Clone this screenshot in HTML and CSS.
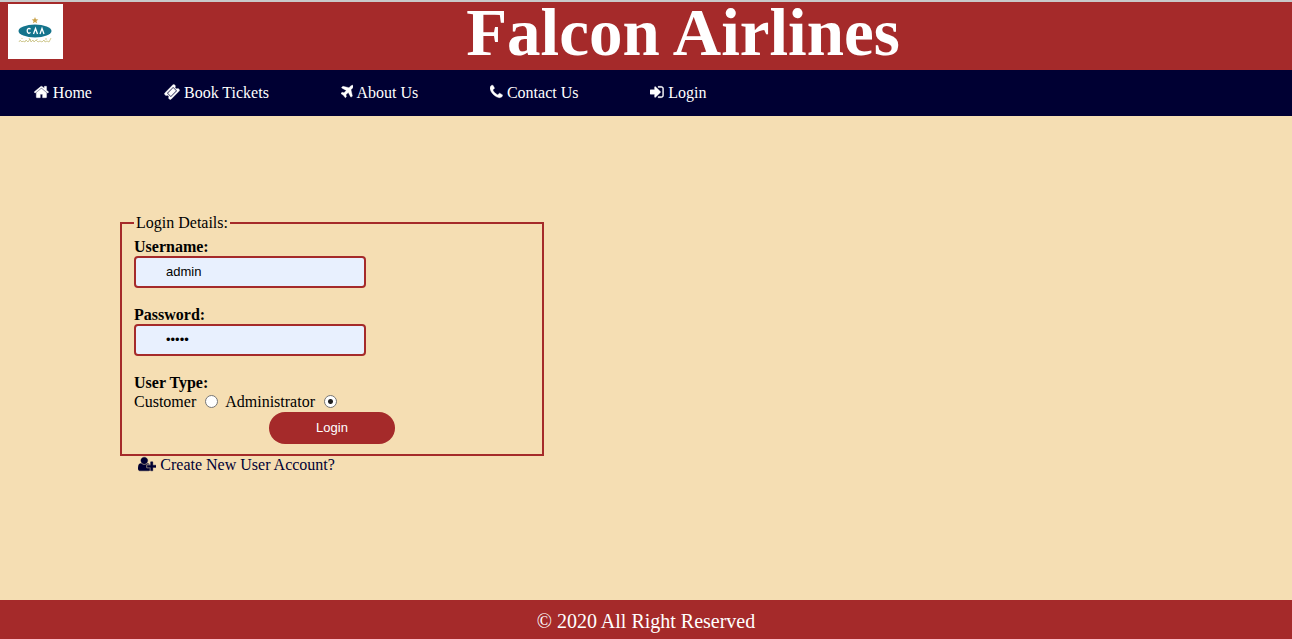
FILE: index.html
```html
<!DOCTYPE html>
<html lang="en">
<head>
<meta charset="utf-8">
<title>Falcon Airlines</title>
<link rel="stylesheet" href="styles.css">
</head>
<body>
<header class="banner">
  <svg class="logo" viewBox="0 0 55 55" role="img" aria-label="CAA logo">
    <rect width="55" height="55" fill="#fff"/>
    <path d="M27 13l.9 2.300 2.400.1-1.900 1.500.7 2.400-2.100-1.400-2.100 1.400.7-2.400-1.900-1.500 2.400-.1z" fill="#c9a24a"/>
    <ellipse cx="27" cy="27" rx="16.500" ry="6.500" fill="#14748c"/>
    <path d="M22.500 25.300c-1.400-1.600-3.300-.8-3.300 1.500s1.900 3.200 3.300 1.600M25.500 30l2-5.500 2 5.500M32 30l2-5.500 2 5.500" fill="none" stroke="#fff" stroke-width="1.300"/>
    <path d="M11 38Q12 35 13 37T15 37L17 38 18 36 20 38 22 35 23 38 25 36 26 38 28 36 30 38 32 37 34 38 36 36 37 38 39 37 41 38 43 34M14 34V35M21 34L22 36M29 35V36M38 34V36" fill="none" stroke="#c5bd78" stroke-width=".8"/>
  </svg>
  <h1 class="title">Falcon Airlines</h1>
</header>
<nav class="nav">
  <a href="#"><svg class="icon" viewBox="0 0 1664 1792" aria-hidden="true"><path d="M1408 992v480q0 26-19 45t-45 19h-384v-384h-256v384h-384q-26 0-45-19t-19-45v-480q0-1 .5-3t.5-3l575-474 575 474q1 2 1 6zm223-69l-62 74q-8 9-21 11h-3q-13 0-21-7l-692-577-692 577q-12 8-24 7-13-2-21-11l-62-74q-8-10-7-23.500t11-21.500l719-599q32-26 76-26t76 26l244 204v-195q0-14 9-23t23-9h192q14 0 23 9t9 23v408l219 182q10 8 11 21.500t-7 23.500z"/></svg> Home</a>
  <a href="#"><svg class="icon" viewBox="0 0 1792 1792" aria-hidden="true"><path d="M1024 452l316 316-572 572-316-316zm-211 979l618-618q19-19 19-45t-19-45l-362-362q-18-18-45-18t-45 18l-618 618q-19 19-19 45t19 45l362 362q18 18 45 18t45-18zm889-637l-907 908q-37 37-90.500 37t-90.500-37l-126-126q56-56 56-136t-56-136-136-56-136 56l-125-126q-37-37-37-90.500t37-90.500l907-906q37-37 90.500-37t90.500 37l125 125q-56 56-56 136t56 136 136 56 136-56l126 125q37 37 37 90.500t-37 90.500z"/></svg> Book Tickets</a>
  <a href="#"><svg class="icon" viewBox="192 0 1408 1792" aria-hidden="true"><path d="M1568 160q44 52 12 148t-108 172l-161 161 160 696q5 19-12 33l-128 96q-7 6-19 6-4 0-7-1-15-3-21-16l-279-508-259 259 53 194q5 17-8 31l-96 96q-9 9-23 9h-2q-15-2-24-13l-189-252-252-189q-11-7-13-23-1-13 9-25l96-97q9-9 23-9 6 0 8 1l194 53 259-259-508-279q-14-8-17-24-2-16 9-27l128-128q14-13 30-8l665 159 160-160q76-76 172-108t148 12z"/></svg> About Us</a>
  <a href="#"><svg class="icon" viewBox="192 0 1408 1792" aria-hidden="true"><path d="M1600 1240q0 27-10 70.500t-21 68.500q-21 50-122 106-94 51-186 51-27 0-53-3.500t-57-12.500-47-14.500-55.500-20.500-49.500-18q-98-35-175-83-127-79-264-216t-216-264q-48-77-83-175-3-9-18-49.500t-20.500-55.500-14.500-47-12.500-57-3.500-53q0-92 51-186 56-101 106-122 25-11 68.500-21t70.500-10q14 0 21 3 18 6 53 76 11 19 30 54t35 63.500 31 53.500q3 4 17.500 25t21.500 35.500 7 28.500q0 20-28.500 50t-62 55-62 53-28.500 46q0 9 5 22.500t8.500 20.500 14 24 11.500 19q76 137 174 235t235 174q2 1 19 11.500t24 14 20.500 8.500 22.500 5q18 0 46-28.500t53-62 55-62 50-28.500q14 0 28.500 7t35.500 21.500 25 17.500q25 15 53.500 31t63.500 35 54 30q70 35 76 53 3 7 3 21z"/></svg> Contact Us</a>
  <a href="#"><svg class="icon" viewBox="128 0 1536 1792" aria-hidden="true"><path d="M1312 896q0 26-19 45l-544 544q-19 19-45 19t-45-19-19-45v-288h-448q-26 0-45-19t-19-45v-384q0-26 19-45t45-19h448v-288q0-26 19-45t45-19 45 19l544 544q19 19 19 45zm352-352v704q0 119-84.500 203.500t-203.500 84.500h-320q-13 0-22.500-9.500t-9.500-22.500q0-4-1-20t-.5-26.500 3-23.500 10-19.500 20.500-6.500h320q66 0 113-47t47-113v-704q0-66-47-113t-113-47h-312l-11.500-1-11.500-3-8-5.500-7-9-2-13.500q0-4-1-20t-.5-26.500 3-23.500 10-19.500 20.500-6.500h320q119 0 203.500 84.500t84.500 203.500z"/></svg> Login</a>
</nav>
<main class="main">
  <form class="login-form">
    <fieldset class="details">
      <legend>Login Details:</legend>
      <div class="field">
        <label class="label" for="username">Username:</label>
        <input class="text-input" id="username" type="text" value="admin">
      </div>
      <div class="field">
        <label class="label" for="password">Password:</label>
        <input class="text-input" id="password" type="password" value="admin">
      </div>
      <div class="label" id="user-type">User Type:</div>
      <div class="radios" role="radiogroup" aria-labelledby="user-type">
        <label for="customer">Customer</label>
        <input class="radio" id="customer" type="radio" name="type">
        <label for="administrator">Administrator</label>
        <input class="radio" id="administrator" type="radio" name="type" checked>
      </div>
      <button class="submit" type="button">Login</button>
    </fieldset>
    <a class="create" href="#"><svg class="icon" viewBox="0 0 2048 1792" aria-hidden="true"><path d="M704 896q-159 0-271.500-112.500T320 512t112.500-271.500T704 128t271.500 112.500T1088 512 975.500 783.500 704 896zm960 128h352q13 0 22.500 9.500t9.500 22.500v192q0 13-9.500 22.500t-22.500 9.500h-352v352q0 13-9.500 22.500t-22.500 9.500h-192q-13 0-22.500-9.500t-9.500-22.500v-352h-352q-13 0-22.500-9.500t-9.500-22.500v-192q0-13 9.500-22.500t22.500-9.500h352v-352q0-13 9.500-22.500t22.500-9.500h192q13 0 22.500 9.500t9.500 22.500v352zM928 1248q0 52 38 90t90 38h256v238q-68 50-171 50H267q-121 0-194-69T0 1405q0-53 3.500-103.500t14-109T44 1084t43-97.500 62-81 85.500-53.500T346 832q19 0 39 17 79 61 154.500 91.500T704 971t164.500-30.500T1023 849q20-17 39-17 132 0 217 96h-223q-52 0-90 38t-38 90v192z"/></svg> Create New User Account?</a>
  </form>
</main>
<footer class="footer">© 2020 All Right Reserved</footer>
</body>
</html>
```
FILE: styles.css
```css
* {
  box-sizing: border-box;
}

body {
  display: flex;
  flex-direction: column;
  min-height: 100vh;
  margin: 0;
  background: wheat;
  color: #000;
  font: 16px/18px "Liberation Serif", "Times New Roman", serif;
}

.banner {
  display: flex;
  align-items: flex-start;
  padding: 2px 0 9px 8px;
  border-top: 2px solid #c9c9c9;
  background: brown;
}

.logo {
  width: 55px;
  height: 55px;
}

.title {
  flex: 1;
  margin: 0 0 0 11px;
  color: #fff;
  font-size: 67px;
  line-height: 57px;
  text-align: center;
}

.nav {
  display: flex;
  flex-wrap: wrap;
  gap: 8px 72px;
  padding: 14px 34px;
  background: #000033;
}

.nav a {
  color: #fff;
  text-decoration: none;
}

.icon {
  height: 16px;
  fill: currentColor;
  stroke: currentColor;
  stroke-width: 40px;
  vertical-align: -2px;
}

.main {
  flex: 1;
  padding: 98px 24px 98px 120px;
}

.login-form {
  max-width: 424px;
}

.details {
  margin: 0;
  padding: 6px 12px 10px;
  border: 2px solid brown;
}

.details legend {
  padding: 0 2px;
}

.field {
  margin-bottom: 18px;
}

.label {
  display: block;
  font-weight: bold;
}

.text-input {
  display: block;
  width: 232px;
  max-width: 100%;
  height: 32px;
  padding: 0 30px 2px;
  border: 2px solid brown;
  border-radius: 4px;
  background: #e8f0fe;
  color: #000;
  font: 13px "Liberation Sans", Arial, sans-serif;
}

.radios {
  display: flex;
  align-items: center;
  height: 20px;
  line-height: 20px;
}

.radio {
  width: 13px;
  height: 13px;
  margin: 0 7px 2px 9px;
  appearance: none;
  border: 1px solid #767676;
  border-radius: 50%;
  background: #fff;
}

.radio:checked {
  background: radial-gradient(circle, #222 2px, #fff 3px);
}

.submit {
  display: block;
  width: 126px;
  height: 32px;
  margin: 0 auto;
  padding: 0 0 2px;
  border: 0;
  border-radius: 16px;
  background: brown;
  color: #fff;
  font: 13px "Liberation Sans", Arial, sans-serif;
}

.create {
  margin-left: 18px;
  color: #000033;
  text-decoration: none;
}

.footer {
  padding: 10px 10px 7px;
  background: brown;
  color: #fff;
  font-size: 20px;
  line-height: 22px;
  text-align: center;
}
```
